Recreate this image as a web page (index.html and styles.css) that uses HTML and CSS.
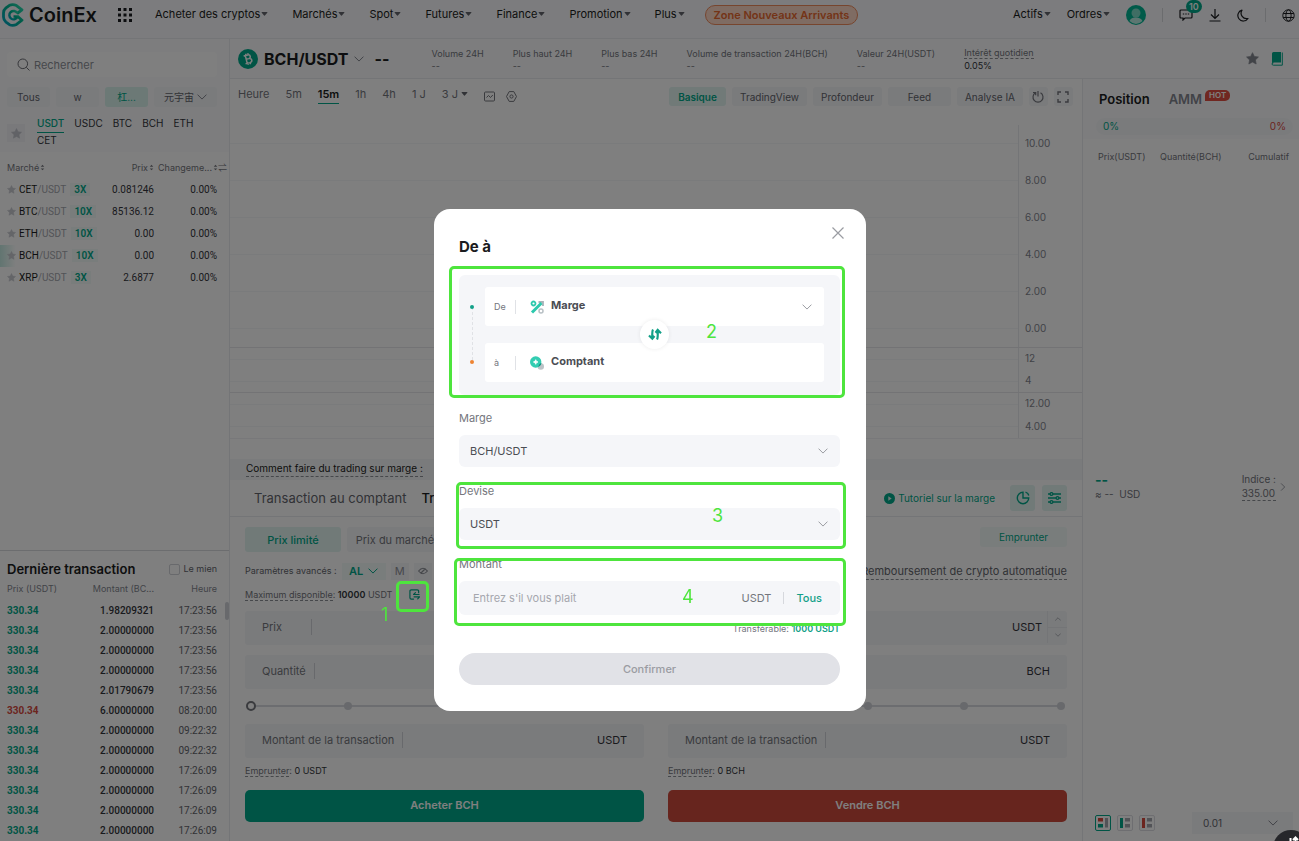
FILE: index.html
```html
<!DOCTYPE html>
<html lang="fr">
  <head>
    <meta charset="UTF-8" />
    <meta name="viewport" content="width=device-width, initial-scale=1.0" />
    <title>CoinEx - BCH/USDT</title>
    <link rel="stylesheet" href="styles.css">
  </head>
  <body>
    <!-- Shared icons -->
    <svg class="sprite" aria-hidden="true">
      <symbol id="caret" viewBox="0 0 8 5"><path d="M1 0h6q1 0 .5.8L4.5 4.5q-.5.6-1 0L.5.8Q0 0 1 0z" fill="currentColor" /></symbol>
      <symbol id="chevron" viewBox="0 0 12 7"><path d="M1 1l5 5 5-5" fill="none" stroke="currentColor" stroke-width="1.2" stroke-linecap="round" stroke-linejoin="round" /></symbol>
      <symbol id="star" viewBox="0 0 12 12"><path d="M6 .6l1.7 3.5 3.8.5-2.8 2.7.7 3.8L6 9.3l-3.4 1.8.7-3.8L.5 4.6l3.8-.5z" fill="currentColor" stroke="currentColor" stroke-width=".6" stroke-linejoin="round" /></symbol>
      <symbol id="sort" viewBox="0 0 5 8"><path d="M.5 3L2.500.8 4.500 3zM.5 5h4L2.500 7.200z" fill="currentColor" /></symbol>
      <symbol id="transfer" viewBox="0 0 12 12"><path d="M10.500 4V2.500q0-1.500-1.500-1.500H2.500Q1 1 1 2.500v7Q1 11 2.500 11H5M11 6H5l2-2M5.500 8.500h6l-2 2.200" fill="none" stroke="currentColor" stroke-width="1.300" stroke-linecap="round" stroke-linejoin="round" /></symbol>
    </svg>

    <div class="app">
      <header class="topbar">
        <a class="brand" href="#">
          <svg width="22" height="24" viewBox="0 0 22 24">
            <defs>
              <linearGradient id="brand-fill" x1="0" y1="1" x2="1" y2="0">
                <stop offset="0" stop-color="#00a5c8" />
                <stop offset=".55" stop-color="#00b591" />
                <stop offset="1" stop-color="#2fe0b4" />
              </linearGradient>
            </defs>
            <path d="M15 10.500L20 6.800L14.500 2.600Q11 .8 7.500 2.300L4 4.900Q1.500 7 1.500 10v4q0 3 2.500 5.100L7.500 21.700q3.500 1.500 7-.3L20 17.200L15.500 13.200" fill="none" stroke="url(#brand-fill)" stroke-width="2.800" stroke-linejoin="round" />
            <path d="M15.300 10.300a4.200 4.200 0 1 0 .2 3.200h-4" fill="none" stroke="url(#brand-fill)" stroke-width="2.400" stroke-linejoin="round" />
          </svg>
          <span>CoinEx</span>
        </a>
        <button class="apps" aria-label="Applications">
          <svg width="14" height="14" viewBox="0 0 14 14" fill="#1b1c20">
            <path d="M0 0h3v3H0zM5.500 0h3v3h-3zM11 0h3v3h-3zM0 5.500h3v3H0zM5.500 5.500h3v3h-3zM11 5.500h3v3h-3zM0 11h3v3H0zM5.500 11h3v3h-3zM11 11h3v3h-3z" />
          </svg>
        </button>
        <nav class="menu">
          <a href="#">Acheter des cryptos<svg class="caret"><use href="#caret" /></svg></a>
          <a href="#">Marchés<svg class="caret"><use href="#caret" /></svg></a>
          <a href="#">Spot<svg class="caret"><use href="#caret" /></svg></a>
          <a href="#">Futures<svg class="caret"><use href="#caret" /></svg></a>
          <a href="#">Finance<svg class="caret"><use href="#caret" /></svg></a>
          <a href="#">Promotion<svg class="caret"><use href="#caret" /></svg></a>
          <a href="#">Plus<svg class="caret"><use href="#caret" /></svg></a>
        </nav>
        <a class="newcomer" href="#">Zone Nouveaux Arrivants</a>
        <div class="account">
          <a href="#">Actifs<svg class="caret"><use href="#caret" /></svg></a>
          <a href="#">Ordres<svg class="caret"><use href="#caret" /></svg></a>
          <svg class="avatar" width="20" height="20" viewBox="0 0 20 20">
            <circle cx="10" cy="10" r="10" fill="#00b493" />
            <circle cx="10" cy="8" r="4.500" fill="#7fdcc9" />
            <path d="M3.500 16q1.500-4 6.500-3.500 5 0 6.500 3.500Q10 22 3.500 16z" fill="#b8ede2" />
          </svg>
          <span class="sep"></span>
          <button class="messages" aria-label="Messages">
            <svg width="14" height="12" viewBox="0 0 14 12" fill="none" stroke="#1b1c20" stroke-width="1.200">
              <path d="M2 1h10q1 0 1 1v6q0 1-1 1H6l-2 2V9H2Q1 9 1 8V2q0-1 1-1z" />
              <path d="M3.800 5h1.400M6.300 5h1.400M8.800 5h1.400" />
            </svg>
            <span class="count">10</span>
          </button>
          <button aria-label="Télécharger">
            <svg width="12" height="13" viewBox="0 0 12 13" fill="none" stroke="#1b1c20" stroke-width="1.200"><path d="M6 0v9M2 5.500l4 4 4-4M.5 12h11" /></svg>
          </button>
          <button aria-label="Mode sombre">
            <svg width="12" height="13" viewBox="0 0 12 13" fill="none" stroke="#1b1c20" stroke-width="1.200"><path d="M5 1.200a5.500 5.500 0 1 0 6 8.300A5.500 5.500 0 0 1 5 1.200z" stroke-linejoin="round" /></svg>
          </button>
          <span class="sep"></span>
          <button aria-label="Langue">
            <svg width="13" height="13" viewBox="0 0 13 13" fill="none" stroke="#1b1c20"><circle cx="6.500" cy="6.500" r="5.700" /><ellipse cx="6.500" cy="6.500" rx="2.600" ry="5.700" /><path d="M1.200 4.500h10.600M1.200 8.500h10.600" /></svg>
          </button>
        </div>
      </header>

      <div class="layout">
        <aside class="sidebar">
          <div class="filters">
            <label class="search">
              <svg width="13" height="13" viewBox="0 0 13 13" fill="none" stroke="#6c6e75"><circle cx="5.800" cy="5.800" r="4.800" /><path d="M9.300 9.300L12.500 12.500" /></svg>
              <input type="text" placeholder="Rechercher" aria-label="Rechercher" />
            </label>
            <div class="tags">
              <button>Tous</button>
              <button>w</button>
              <button class="active">杠...</button>
              <button>元宇宙<svg class="chev"><use href="#chevron" /></svg></button>
            </div>
            <div class="coins">
              <button class="fav" aria-label="Favoris"><svg width="11" height="11"><use href="#star" /></svg></button>
              <div class="coin-tabs">
                <a class="active" href="#">USDT</a><a href="#">USDC</a><a href="#">BTC</a><a href="#">BCH</a><a href="#">ETH</a><a href="#">CET</a>
              </div>
            </div>
          </div>
          <table class="markets">
            <thead>
              <tr>
                <th>Marché<svg class="sort"><use href="#sort" /></svg></th>
                <th>Prix<svg class="sort"><use href="#sort" /></svg></th>
                <th>Changeme...<svg class="sort"><use href="#sort" /></svg>⇌</th>
              </tr>
            </thead>
            <tbody>
              <tr><td><svg class="star"><use href="#star" /></svg>CET<i>/USDT</i><b>3X</b></td><td>0.081246</td><td>0.00%</td></tr>
              <tr><td><svg class="star"><use href="#star" /></svg>BTC<i>/USDT</i><b>10X</b></td><td>85136.12</td><td>0.00%</td></tr>
              <tr><td><svg class="star"><use href="#star" /></svg>ETH<i>/USDT</i><b>10X</b></td><td>0.00</td><td>0.00%</td></tr>
              <tr class="current"><td><svg class="star"><use href="#star" /></svg>BCH<i>/USDT</i><b>10X</b></td><td>0.00</td><td>0.00%</td></tr>
              <tr><td><svg class="star"><use href="#star" /></svg>XRP<i>/USDT</i><b>3X</b></td><td>2.6877</td><td>0.00%</td></tr>
            </tbody>
          </table>

          <section class="trades">
            <div class="trades-head">
              <h2>Dernière transaction</h2>
              <label><input type="checkbox" />Le mien</label>
            </div>
            <table>
              <thead><tr><th>Prix (USDT)</th><th>Montant (BC...</th><th>Heure</th></tr></thead>
              <tbody>
                <tr><td>330.34</td><td>1.98209321</td><td>17:23:56</td></tr>
                <tr><td>330.34</td><td>2.00000000</td><td>17:23:56</td></tr>
                <tr><td>330.34</td><td>2.00000000</td><td>17:23:56</td></tr>
                <tr><td>330.34</td><td>2.00000000</td><td>17:23:56</td></tr>
                <tr><td>330.34</td><td>2.01790679</td><td>17:23:56</td></tr>
                <tr class="sell"><td>330.34</td><td>6.00000000</td><td>08:20:00</td></tr>
                <tr><td>330.34</td><td>2.00000000</td><td>09:22:32</td></tr>
                <tr><td>330.34</td><td>2.00000000</td><td>09:22:32</td></tr>
                <tr><td>330.34</td><td>2.00000000</td><td>17:26:09</td></tr>
                <tr><td>330.34</td><td>2.00000000</td><td>17:26:09</td></tr>
                <tr><td>330.34</td><td>2.00000000</td><td>17:26:09</td></tr>
                <tr><td>330.34</td><td>2.00000000</td><td>17:26:09</td></tr>
              </tbody>
            </table>
            <span class="scroll-thumb"></span>
          </section>
        </aside>

        <div class="content">
          <section class="pair">
            <svg width="20" height="20" viewBox="0 0 20 20">
              <circle cx="10" cy="10" r="10" fill="#00a98a" />
              <g transform="rotate(-14 10 10)" fill="none" stroke="#fff" stroke-width="1.500">
                <path d="M8 6h2.800q2 .1 2 1.900T10.800 9.800H8.200M10.800 9.800q2.600.1 2.600 2.100T11 14H8M8.200 6v8M6.500 6h2M6.500 14h2M9 6V4.300M11.200 6V4.300M9 15.700V14M11.200 15.700V14" />
              </g>
            </svg>
            <h1>BCH/USDT</h1>
            <svg class="chev"><use href="#chevron" /></svg>
            <strong class="last">--</strong>
            <dl class="stats">
              <div><dt>Volume 24H</dt><dd>--</dd></div>
              <div><dt>Plus haut 24H</dt><dd>--</dd></div>
              <div><dt>Plus bas 24H</dt><dd>--</dd></div>
              <div><dt>Volume de transaction 24H(BCH)</dt><dd>--</dd></div>
              <div><dt>Valeur 24H(USDT)</dt><dd>--</dd></div>
              <div><dt class="dashed">Intérêt quotidien</dt><dd class="rate">0.05%</dd></div>
            </dl>
            <div class="pair-tools">
              <svg width="13" height="13"><use href="#star" /></svg>
              <svg width="12" height="14" viewBox="0 0 12 14"><path d="M2.500 0H10v10.500H2.500Q1 10.500 1 12V1.500Q1 0 2.500 0z" fill="#00a98a" /><path d="M11.300.5v12.700H2.500Q1 13.200 1 12t1.500-1.200" fill="none" stroke="#00a98a" /></svg>
            </div>
          </section>

          <div class="workspace">
            <main class="center">
              <div class="chart-bar">
                <div class="periods">
                  <a href="#">Heure</a><a href="#">5m</a><a class="active" href="#">15m</a><a href="#">1h</a><a href="#">4h</a><a href="#">1 J</a><a href="#">3 J<svg class="caret"><use href="#caret" /></svg></a>
                  <svg width="11" height="11" viewBox="0 0 11 11" fill="none" stroke="#74767d"><rect x=".5" y="1" width="10" height="9" rx="1" /><path d="M2.500 6.500l2-2 2 2 2.300-2.500" /></svg>
                  <svg width="11" height="11" viewBox="0 0 11 11" fill="none" stroke="#74767d"><path d="M3.200.6h4.600l2.700 4.900-2.700 4.900H3.200L.5 5.500z" stroke-linejoin="round" /><circle cx="5.500" cy="5.500" r="1.600" /></svg>
                </div>
                <div class="views">
                  <button class="active">Basique</button>
                  <button>TradingView</button>
                  <button>Profondeur</button>
                  <button>Feed</button>
                  <button>Analyse IA</button>
                  <button class="square" aria-label="Réinitialiser"><svg width="12" height="12" viewBox="0 0 12 12" fill="none" stroke="#74767d" stroke-width="1.200"><path d="M6 0v5.500M3.500 1.800a5 5 0 1 0 5 0M1 1.500h2.700v2.700" /></svg></button>
                  <button class="square" aria-label="Plein écran"><svg width="12" height="12" viewBox="0 0 12 12" fill="none" stroke="#74767d" stroke-width="1.400"><path d="M1 4V1h3M8 1h3v3M11 8v3H8M4 11H1V8" /></svg></button>
                </div>
              </div>

              <div class="chart">
                <div class="pane main-pane">
                  <div class="tick"><i></i><span>10.00</span></div>
                  <div class="tick"><i></i><span>8.00</span></div>
                  <div class="tick"><i></i><span>6.00</span></div>
                  <div class="tick"><i></i><span>4.00</span></div>
                  <div class="tick"><i></i><span>2.00</span></div>
                  <div class="tick"><i></i><span>0.00</span></div>
                </div>
                <div class="pane">
                  <div class="tick"><i></i><span>12</span></div>
                  <div class="tick"><i></i><span>4</span></div>
                </div>
                <div class="pane">
                  <div class="tick"><i></i><span>12.00</span></div>
                  <div class="tick"><i></i><span>4.00</span></div>
                </div>
              </div>

              <div class="notice"><a class="dashed" href="#">Comment faire du trading sur marge :</a><span class="step"></span></div>

              <div class="trade-tabs">
                <a href="#">Transaction au comptant</a>
                <a class="active" href="#">Transaction sur marge</a>
                <a class="tutorial" href="#">
                  <svg width="11" height="11" viewBox="0 0 11 11"><circle cx="5.500" cy="5.500" r="5.500" fill="#00a98a" /><path d="M4.300 3.300v4.400l3.400-2.200z" fill="#e2f5f1" /></svg>
                  Tutoriel sur la marge
                </a>
                <button aria-label="Répartition"><svg width="14" height="14" viewBox="0 0 14 14" fill="none" stroke="#00a98a" stroke-width="1.400"><path d="M7 1.300a5.700 5.700 0 1 0 5.700 5.700H7zM9.500 1.200q2.800.8 3.300 3.300" /></svg></button>
                <button aria-label="Réglages"><svg width="13" height="12" viewBox="0 0 13 12" fill="none" stroke="#00a98a" stroke-width="1.300"><path d="M0 2h2M5 2h8M0 6h8M11 6h2M0 10h2M5 10h8" /><circle cx="3.500" cy="2" r="1.400" /><circle cx="9.500" cy="6" r="1.400" /><circle cx="3.500" cy="10" r="1.400" /></svg></button>
              </div>

              <div class="order">
                <div class="order-types">
                  <button class="active">Prix limité</button>
                  <button>Prix du marché</button>
                  <button class="borrow">Emprunter</button>
                </div>
                <div class="advanced">
                  <span>Paramètres avancés :</span>
                  <button class="mode">AL<svg class="chev"><use href="#chevron" /></svg></button>
                  <button>M</button>
                  <button aria-label="Masquer"><svg width="10" height="8" viewBox="0 0 10 8" fill="none" stroke="#8d9097" stroke-width="1.200"><path d="M.6 4Q5-1.500 9.400 4 5 9.500.6 4zM2.500 6.500l5-5" /></svg></button>
                  <a class="dashed" href="#">Remboursement de crypto automatique</a>
                </div>
                <div class="sides">
                  <form class="side">
                    <p class="available"><span class="dashed">Maximum disponible</span>: <b>10000</b> USDT <svg><use href="#transfer" /></svg></p>
                    <label class="field"><span>Prix</span><input type="text" class="price" /><em>USDT</em></label>
                    <label class="field"><span>Quantité</span><input type="text" /><em>BCH</em></label>
                    <div class="slider"><i></i><i></i><i></i><i></i><i></i><input type="range" min="0" max="100" value="0" aria-label="Pourcentage" /></div>
                    <label class="field"><span>Montant de la transaction</span><input type="text" /><em>USDT</em></label>
                    <p class="debt"><span class="dashed">Emprunter</span>: <b>0 USDT</b></p>
                    <button type="button" class="buy">Acheter BCH</button>
                  </form>
                  <form class="side">
                    <p class="available"><span class="dashed">Maximum disponible</span>: <b>10000.0000</b> BCH <svg><use href="#transfer" /></svg></p>
                    <label class="field"><span>Prix</span><input type="text" class="price" /><em>USDT</em><span class="stepper"><svg class="chev up"><use href="#chevron" /></svg><svg class="chev"><use href="#chevron" /></svg></span></label>
                    <label class="field"><span>Quantité</span><input type="text" /><em>BCH</em></label>
                    <div class="slider"><i></i><i></i><i></i><i></i><i></i><input type="range" min="0" max="100" value="0" aria-label="Pourcentage" /></div>
                    <label class="field"><span>Montant de la transaction</span><input type="text" /><em>USDT</em></label>
                    <p class="debt"><span class="dashed">Emprunter</span>: <b>0 BCH</b></p>
                    <button type="button" class="sell-btn">Vendre BCH</button>
                  </form>
                </div>
              </div>
            </main>

            <aside class="book">
              <div class="book-head">
                <div class="book-tabs"><a class="active" href="#">Position</a><a href="#">AMM</a><span class="hot">HOT</span></div>
                <div class="ratio"><span>0%</span><span>0%</span></div>
              </div>
              <div class="book-cols"><span>Prix(USDT)</span><span>Quantité(BCH)</span><span>Cumulatif</span></div>
              <div class="book-mid">
                <div><strong>--</strong><span>≈ --&nbsp; USD</span></div>
                <a href="#"><span class="dashed">Indice :<br />335.00</span><svg class="chev right"><use href="#chevron" /></svg></a>
              </div>
              <div class="book-foot">
                <button class="active" aria-label="Tous les ordres"><svg width="10" height="10" viewBox="0 0 10 10"><path d="M0 0h5v3.500H0z" fill="#d84a3e" /><path d="M0 6h5v3.500H0z" fill="#00a98a" /><path d="M7 0h3v9.500H7z" fill="#a5a7ae" /></svg></button>
                <button aria-label="Achats"><svg width="10" height="10" viewBox="0 0 10 10"><path d="M0 0h3v10H0z" fill="#00a98a" /><path d="M5 0h5v3.500H5zM5 6h5v3.500H5z" fill="#a5a7ae" /></svg></button>
                <button aria-label="Ventes"><svg width="10" height="10" viewBox="0 0 10 10"><path d="M0 0h3v10H0z" fill="#d84a3e" /><path d="M5 0h5v3.500H5zM5 6h5v3.500H5z" fill="#a5a7ae" /></svg></button>
                <div class="precision"><select aria-label="Précision"><option>0.01</option></select><svg class="chev"><use href="#chevron" /></svg></div>
              </div>
            </aside>
          </div>
        </div>
      </div>
    </div>

    <div class="overlay">
      <form class="modal" role="dialog" aria-labelledby="modal-title">
        <button type="button" class="close" aria-label="Fermer"><svg width="12" height="12" viewBox="0 0 12 12" stroke="#9a9ca2" stroke-width="1.200"><path d="M.5.5l11 11M11.500.5l-11 11" /></svg></button>
        <h2 id="modal-title">De à</h2>
        <div class="route">
          <div class="rail"><i></i><i class="to"></i></div>
          <div class="ends">
            <button type="button" class="end">
              <span>De</span>
              <svg width="14" height="14" viewBox="0 0 14 14" fill="none"><path d="M8.500 2h4.500v4" stroke="#a9b2b8" stroke-width="1.800" /><circle cx="11" cy="11" r="2" stroke="#b8c0c5" stroke-width="1.500" /><circle cx="3.500" cy="3.500" r="2" stroke="#2cc9ad" stroke-width="1.800" /><path d="M2 12.500L11.500 3" stroke="#2cc9ad" stroke-width="3" /></svg>
              <strong>Marge</strong>
              <svg class="chev"><use href="#chevron" /></svg>
            </button>
            <div class="end">
              <span>à</span>
              <svg width="14" height="14" viewBox="0 0 14 14"><circle cx="10.800" cy="10.500" r="3.200" fill="#bcc3c7" /><circle cx="5.700" cy="6" r="5.700" fill="#33cdb2" /><path d="M5.700 3.700l.7 1.600 1.600.7-1.600.7-.7 1.600L5 6.700 3.400 6 5 5.300z" fill="#fff" stroke="#fff" stroke-width=".8" /><path d="M8.300 11q3-1.300 3.200-4-2.500.5-3.200 4z" fill="#118f7c" /></svg>
              <strong>Comptant</strong>
            </div>
          </div>
          <button type="button" class="swap" aria-label="Inverser"><svg width="14" height="13" viewBox="0 0 14 13" fill="none" stroke="#12a088" stroke-width="2.200"><path d="M5 1.500Q4 3 4.300 10.500M1 7.500l3.300 3.200L6.500 8M9 11.500q1-1.500.7-9M13 5.200L9.700 2 7.500 4.800" /></svg></button>
        </div>
        <label for="pair-select">Marge</label>
        <div class="picker"><select id="pair-select"><option>BCH/USDT</option></select><svg class="chev"><use href="#chevron" /></svg></div>
        <label for="asset-select">Devise</label>
        <div class="picker"><select id="asset-select"><option>USDT</option></select><svg class="chev"><use href="#chevron" /></svg></div>
        <label for="amount">Montant</label>
        <div class="amount"><input id="amount" type="text" placeholder="Entrez s'il vous plait" /><span>USDT</span><button type="button">Tous</button></div>
        <p class="transferable">Transférable: <b>1000 USDT</b></p>
        <button type="button" class="confirm" disabled>Confirmer</button>

        <!-- Tutorial markers -->
        <span class="mark mark-1"></span><span class="num num-1">1</span>
        <span class="mark mark-2"></span><span class="num num-2">2</span>
        <span class="mark mark-3"></span><span class="num num-3">3</span>
        <span class="mark mark-4"></span><span class="num num-4">4</span>
      </form>
    </div>
    <button class="helper" aria-label="Outils"><svg width="12" height="12" viewBox="0 0 12 12" fill="none" stroke="#fff" stroke-width="2"><path d="M3.500 2v9M8.500 10V1M6 4l2.500-2.500L11 4" /></svg></button>
  </body>
</html>
```
FILE: styles.css
```css
* {
  box-sizing: border-box;
}

body {
  margin: 0;
  font-family: Inter, "Noto Sans CJK SC", sans-serif;
  font-size: 11px;
  line-height: 16px;
  color: #1b1c20;
  background-color: #fff;
}

a {
  color: inherit;
  text-decoration: none;
}

button,
input,
select {
  font: inherit;
  color: inherit;
  border: none;
  background: none;
  padding: 0;
  margin: 0;
}

button {
  cursor: pointer;
}

h1,
h2,
p,
dl,
dd {
  margin: 0;
}

table {
  width: 100%;
  border-collapse: collapse;
  table-layout: fixed;
}

th,
td {
  padding: 0;
  font-weight: 400;
}

.sprite {
  display: none;
}

.caret {
  width: 7px;
  height: 4px;
  margin-left: 1px;
  color: #63656c;
}

.chev {
  width: 10px;
  height: 6px;
  flex: none;
  color: #83868f;
}

.dashed {
  border-bottom: 1px dashed #8d9097;
}

.app {
  display: flex;
  flex-direction: column;
  height: 100vh;
  overflow: hidden;
}

/* Top bar */
.topbar {
  display: flex;
  flex: none;
  align-items: center;
  height: 39px;
  padding: 0 4px 8px 2px;
  border-bottom: 1px solid #e9eaee;
  background-color: #f8f9fc;
}

.brand {
  display: flex;
  align-items: center;
  gap: 5px;
  width: 116px;
  font-size: 20px;
  font-weight: 600;
}

.apps svg,
.account svg,
.views svg,
.trade-tabs svg {
  display: block;
}

.menu {
  display: flex;
  gap: 24px;
  margin: 0 20px 0 23px;
}

.menu a,
.account a {
  display: flex;
  align-items: center;
  padding-bottom: 2px;
  white-space: nowrap;
}

.newcomer {
  padding: 1px 8px;
  border: 1px solid #ee8a5c;
  border-radius: 12px;
  background-color: #ffd9c7;
  color: #e8682f;
  font-weight: 600;
  white-space: nowrap;
}

.account {
  display: flex;
  align-items: center;
  gap: 16px;
  margin-left: auto;
}

.sep {
  width: 1px;
  height: 14px;
  background-color: #d6d8dd;
}

.messages {
  position: relative;
}

.count {
  position: absolute;
  left: 7px;
  top: -9px;
  padding: 0 3px;
  border-radius: 8px;
  background-color: #00a98a;
  color: #fff;
  font-size: 9px;
  line-height: 13px;
  font-weight: 600;
}

.layout {
  display: flex;
  flex: 1;
  min-height: 0;
}

/* Market list */
.sidebar {
  display: flex;
  flex-direction: column;
  flex: none;
  width: 230px;
  border-right: 1px solid #e9eaee;
}

.filters {
  padding: 13px 12px 3px 7px;
  background-color: #fafbfd;
}

.search {
  display: flex;
  align-items: center;
  gap: 4px;
  height: 25px;
  padding: 0 10px;
  border-radius: 4px;
  background-color: #fff;
}

.search input {
  min-width: 0;
  flex: 1;
}

.search input::placeholder {
  color: #8d9097;
}

.tags {
  display: grid;
  grid-template-columns: 43px 43px 43px 1fr;
  gap: 6px;
  margin-top: 10px;
}

.tags button {
  display: flex;
  align-items: center;
  justify-content: center;
  gap: 3px;
  height: 20px;
  border-radius: 3px;
  background-color: #f5f6f9;
  color: #63656c;
  font-size: 10px;
}

.tags .active {
  background-color: #d8f3ed;
  color: #00a98a;
}

.coins {
  display: flex;
  gap: 12px;
  margin-top: 8px;
  color: #33353b;
  font-size: 10px;
}

.fav {
  display: flex;
  align-items: center;
  justify-content: center;
  width: 18px;
  height: 18px;
  margin-top: 9px;
  background-color: #f2f3f7;
  color: #c3c5cc;
}

.coin-tabs {
  display: flex;
  flex: 1;
  flex-wrap: wrap;
  column-gap: 10px;
  padding-right: 16px;
}

.coin-tabs a {
  line-height: 17px;
}

.coin-tabs .active {
  color: #00a98a;
  font-weight: 500;
  box-shadow: 0 1px #00a98a;
}

.markets {
  margin-top: 4px;
  font-size: 10px;
}

.markets td {
  color: #33353b;
  font-family: Roboto, sans-serif;
}

.markets th {
  height: 23px;
  color: #74767d;
  font-size: 9px;
  text-align: right;
  white-space: nowrap;
}

.markets th:first-child {
  width: 110px;
  padding-left: 7px;
  text-align: left;
}

.markets th:nth-child(2) {
  width: 44px;
}

.markets th:last-child {
  padding-right: 2px;
}

.markets td {
  height: 22px;
  text-align: right;
  white-space: nowrap;
}

.markets td:first-child {
  padding-left: 7px;
  color: #1b1c20;
  text-align: left;
}

.markets td:last-child {
  padding-right: 12px;
}

.markets i {
  color: #a5a7ae;
  font-style: normal;
}

.markets b {
  margin-left: 4px;
  padding: 1px 4px;
  background-color: #f3fbf9;
  color: #00a98a;
  font-weight: 600;
}

.markets .current td:first-child {
  background: linear-gradient(90deg, #c4eae2, #fff 16px);
}

.star {
  width: 9px;
  height: 9px;
  margin-right: 3px;
  vertical-align: -1px;
  color: #c8cad0;
}

.sort {
  width: 5px;
  height: 7px;
  margin-left: 1px;
}

/* Latest trades */
.trades {
  position: relative;
  margin-top: auto;
  padding: 8px 12px 0 7px;
  border-top: 1px solid #d9dadf;
  font-size: 10px;
}

.trades-head {
  display: flex;
  justify-content: space-between;
  align-items: center;
  height: 20px;
  color: #63656c;
}

.trades h2 {
  color: #1b1c20;
  font-size: 13px;
  font-weight: 600;
}

.trades label {
  display: flex;
  align-items: center;
  gap: 4px;
  font-size: 9px;
}

.trades input {
  appearance: none;
  width: 11px;
  height: 11px;
  border: 1px solid #d0d2d8;
  border-radius: 2px;
}

.trades th,
.trades td {
  height: 20px;
  text-align: right;
  white-space: nowrap;
}

.trades th {
  height: 22px;
  padding-bottom: 3px;
  color: #83868f;
  font-size: 9px;
}

.trades th:first-child,
.trades td:first-child {
  width: 70px;
  text-align: left;
}

.trades th:nth-child(2) {
  width: 77px;
}

.trades td {
  color: #33353b;
  font-family: Roboto, sans-serif;
  font-weight: 500;
}

.trades td:first-child {
  color: #00a98a;
  font-weight: 700;
}

.trades .sell td:first-child {
  color: #d84a3e;
}

.trades td:last-child {
  color: #63656c;
  font-weight: 400;
}

.scroll-thumb {
  position: absolute;
  right: 0;
  top: 51px;
  width: 4px;
  height: 18px;
  border-radius: 2px;
  background-color: #d0d2d8;
}

.content {
  display: flex;
  flex-direction: column;
  flex: 1;
  min-width: 0;
}

/* Pair header */
.pair {
  display: flex;
  flex: none;
  align-items: center;
  height: 40px;
  padding: 0 16px 0 8px;
  border-bottom: 1px solid #e9eaee;
  background-color: #fafbfd;
}

.pair h1 {
  margin: 0 5px 0 6px;
  font-size: 16px;
}

.last {
  width: 57px;
  margin-left: 11px;
  font-size: 16px;
}

.stats {
  display: flex;
  gap: 29px;
  padding-top: 2px;
  color: #74767d;
  font-size: 9px;
  line-height: 12px;
  white-space: nowrap;
}

.rate {
  color: #33353b;
}

.stats .dashed {
  margin-bottom: 1px;
  line-height: 10px;
}

.pair-tools {
  display: flex;
  align-items: center;
  gap: 12px;
  margin-left: auto;
  color: #83868f;
}

.workspace {
  display: flex;
  flex: 1;
  min-height: 0;
}

.center {
  flex: 1;
  min-width: 0;
}

/* Chart */
.chart-bar {
  display: flex;
  justify-content: space-between;
  padding: 8px 9px 0 8px;
}

.periods {
  display: flex;
  align-items: flex-start;
  gap: 16px;
  color: #74767d;
  line-height: 14px;
  white-space: nowrap;
}

.periods a {
  padding-bottom: 2px;
}

.periods svg {
  margin: 4px -5px 0 0;
}

.periods a svg {
  margin: 0 0 2px 3px;
}

.periods .active {
  color: #1b1c20;
  font-weight: 600;
  box-shadow: 0 1px #00a98a;
}

.views {
  display: flex;
  gap: 6px;
}

.views button {
  min-width: 63px;
  height: 19px;
  padding: 0 8px;
  border-radius: 3px;
  background-color: #f5f6f9;
  color: #63656c;
  font-size: 10px;
}

.views .active {
  min-width: 57px;
  background-color: #e2f5f1;
  color: #00a98a;
  font-weight: 600;
}

.views .square {
  min-width: 19px;
  padding: 0 3px;
}

.chart {
  padding-bottom: 20px;
}

.pane {
  display: flex;
  flex-direction: column;
  height: 45px;
  border-bottom: 1px solid #e6e7eb;
}

.pane:last-child {
  height: 46px;
  border-bottom-color: #f0f1f4;
}

.main-pane {
  height: 242px;
  padding-top: 19px;
}

.tick {
  display: flex;
  flex: 1;
  align-items: center;
}

.tick i {
  flex: 1;
  height: 1px;
  background-color: #f5f6f9;
}

.tick span {
  display: flex;
  align-items: center;
  align-self: stretch;
  width: 64px;
  padding: 0 0 2px 6px;
  border-left: 1px solid #e9eaee;
  color: #83868f;
  font-size: 10px;
}

.notice {
  display: flex;
  align-items: center;
  gap: 12px;
  height: 21px;
  padding: 0 0 2px 16px;
  background-color: #f5f6f9;
  font-size: 10px;
}

.step {
  width: 12px;
  height: 12px;
  border-radius: 50%;
  background-color: #d9dbe0;
}

.trade-tabs {
  display: flex;
  align-items: center;
  gap: 7px;
  height: 37px;
  padding: 0 15px 0 24px;
  border-bottom: 1px solid #e9eaee;
  color: #63656c;
  font-size: 13px;
}

.trade-tabs .active {
  margin-left: 8px;
  color: #1b1c20;
  font-weight: 500;
}

.trade-tabs .tutorial {
  display: flex;
  align-items: center;
  gap: 3px;
  margin-left: auto;
  padding-right: 8px;
  color: #00a98a;
  font-size: 10px;
}

.trade-tabs button {
  display: flex;
  align-items: center;
  justify-content: center;
  width: 25px;
  height: 26px;
  border-radius: 3px;
  background-color: #e2f5f1;
}

/* Order form */
.order {
  padding: 10px 15px 0;
}

.order-types {
  display: flex;
  align-items: flex-start;
  gap: 6px;
}

.order-types button {
  width: 96px;
  height: 25px;
  border-radius: 3px;
  background-color: #f5f6f9;
  color: #74767d;
}

.order-types .active {
  background-color: #e2f5f1;
  color: #00a98a;
  font-weight: 500;
}

.order-types .borrow {
  width: 87px;
  height: 20px;
  margin-left: auto;
  background-color: #f3fbf9;
  color: #00a98a;
  font-size: 10px;
}

.advanced {
  display: flex;
  align-items: center;
  gap: 5px;
  height: 18px;
  margin-top: 10px;
  color: #63656c;
  font-size: 9px;
}

.advanced button {
  display: flex;
  align-items: center;
  justify-content: center;
  gap: 5px;
  width: 18px;
  height: 17px;
  background-color: #f5f6f9;
  color: #8d9097;
  font-size: 11px;
}

.advanced .mode {
  width: 44px;
  background-color: #f3fbf9;
  color: #00a98a;
  font-weight: 600;
}

.mode .chev {
  color: #00a98a;
}

.advanced a {
  margin-left: auto;
  font-size: 11px;
}

.sides {
  display: grid;
  grid-template-columns: 1fr 1fr;
  gap: 24px;
}

.available,
.debt {
  height: 16px;
  color: #74767d;
  font-size: 9px;
  line-height: 12px;
  white-space: nowrap;
}

.available {
  margin: 9px 0 6px;
}

.available svg {
  width: 11px;
  height: 11px;
  margin-left: 14px;
  vertical-align: -2px;
  color: #00a98a;
}

.available b {
  color: #33353b;
  font-weight: 600;
}

.debt b {
  color: #33353b;
  font-weight: 400;
}

.field {
  display: flex;
  align-items: center;
  height: 34px;
  padding: 0 0 2px 17px;
  border-radius: 3px;
  background-color: #f5f6f9;
  color: #74767d;
}

.field + .field {
  margin-top: 10px;
}

.field input {
  flex: 1;
  min-width: 0;
  height: 16px;
  margin-left: 8px;
  border-left: 1px solid #d0d2d8;
}

.field .price {
  margin-left: 29px;
}

.field em {
  margin-right: 17px;
  color: #33353b;
  font-style: normal;
}

.field em:nth-last-child(2) {
  margin-right: 5px;
}

.stepper {
  display: flex;
  flex-direction: column;
  justify-content: space-around;
  align-items: center;
  align-self: stretch;
  width: 20px;
  border-left: 1px solid #e9eaee;
  background: linear-gradient(#e9eaee, #e9eaee) center / 100% 1px no-repeat;
}

.stepper .chev {
  width: 6px;
  height: 4px;
}

.up {
  transform: rotate(180deg);
}

.slider {
  position: relative;
  display: flex;
  justify-content: space-between;
  align-items: center;
  height: 34px;
  margin-bottom: 1px;
  padding: 0 2px;
  background: linear-gradient(#d9dbe0, #d9dbe0) center / calc(100% - 12px) 2px no-repeat;
}

.slider i {
  width: 8px;
  height: 8px;
  border-radius: 50%;
  background-color: #d0d2d8;
}

.slider input {
  position: absolute;
  inset: 0;
  width: 100%;
  appearance: none;
}

.slider input::-webkit-slider-thumb {
  appearance: none;
  width: 10px;
  height: 10px;
  margin-left: 1px;
  border: 2px solid #74767d;
  border-radius: 50%;
  background-color: #fff;
}

.debt {
  margin: 7px 0 9px;
}

.buy,
.sell-btn {
  width: 100%;
  height: 32px;
  padding-bottom: 2px;
  border-radius: 5px;
  background-color: #00a98a;
  color: #fff;
  font-weight: 600;
}

.sell-btn {
  background-color: #cf4a3d;
}

/* Order book */
.book {
  display: flex;
  flex-direction: column;
  flex: none;
  width: 217px;
  border-left: 1px solid #e9eaee;
}

.book-head {
  padding: 10px 6px 4px 13px;
  background-color: #fafbfd;
}

.book-tabs {
  display: flex;
  align-items: center;
  height: 20px;
  padding-left: 3px;
  color: #83868f;
  font-size: 13px;
  font-weight: 600;
}

.book-tabs a {
  margin-right: 19px;
}

.book-tabs a:nth-child(2) {
  margin-right: 3px;
}

.book-tabs .active {
  color: #1b1c20;
}

.hot {
  align-self: flex-start;
  margin-top: 1px;
  padding: 0 4px;
  border-radius: 5px 5px 5px 0;
  background-color: #e04f43;
  color: #fff;
  font-size: 8px;
  line-height: 11px;
}

.ratio {
  display: flex;
  justify-content: space-between;
  margin-top: 9px;
  padding: 0 7px;
  border-radius: 9px;
  background-color: #f5f6f9;
  color: #00a98a;
  font-size: 10px;
  line-height: 17px;
}

.ratio span:last-child {
  color: #d84a3e;
}

.book-cols {
  display: grid;
  grid-template-columns: 62px 1fr auto;
  padding: 10px 10px 0 15px;
  color: #74767d;
  font-size: 9px;
}

.book-mid {
  display: flex;
  flex: 1;
  justify-content: space-between;
  align-items: center;
  padding: 0 12px 4px;
  color: #74767d;
  font-size: 10px;
  line-height: 14px;
}

.book-mid strong {
  display: block;
  color: #00a98a;
  font-size: 14px;
}

.book-mid a {
  display: flex;
  align-items: center;
  gap: 3px;
}

.right {
  width: 8px;
  transform: rotate(-90deg);
}

.book-foot {
  display: flex;
  align-items: center;
  gap: 6px;
  padding: 0 6px 7px 12px;
}

.book-foot button {
  display: flex;
  align-items: center;
  justify-content: center;
  width: 16px;
  height: 16px;
  border: 1px solid #dcdde2;
  border-radius: 2px;
}

.book-foot .active {
  border-color: #00a98a;
}

.precision {
  position: relative;
  width: 101px;
  margin-left: auto;
}

.precision select {
  appearance: none;
  width: 100%;
  height: 22px;
  padding: 0 11px;
  background-color: #f5f6f9;
  color: #63656c;
  font-size: 10px;
}

.precision .chev {
  position: absolute;
  right: 15px;
  top: 8px;
}

/* Transfer modal */
.overlay {
  position: fixed;
  inset: 0;
  display: flex;
  justify-content: center;
  align-items: flex-start;
  padding: 209px 0 0 1px;
  background-color: rgba(0, 0, 0, 0.5);
}

.modal {
  position: relative;
  display: flex;
  flex-direction: column;
  width: 432px;
  padding: 27px 26px 26px 25px;
  border-radius: 16px;
  background-color: #fff;
}

.modal .chev {
  color: #9a9ca2;
}

.close {
  position: absolute;
  right: 22px;
  top: 18px;
  line-height: 0;
}

.modal h2 {
  font-size: 15px;
  line-height: 22px;
}

.route {
  position: relative;
  display: flex;
  margin: 17px 0 15px;
  padding: 12px 16px 13px 11px;
  border-radius: 6px;
  background-color: #f5f6f9;
}

.rail {
  display: flex;
  flex-direction: column;
  justify-content: space-between;
  width: 15px;
  padding: 18px 0;
  background: repeating-linear-gradient(#e0e2e6 0 3px, transparent 3px 5px) 2px 20px / 1px 54px no-repeat;
}

.rail i {
  width: 4px;
  height: 4px;
  border-radius: 50%;
  background-color: #12a088;
}

.rail .to {
  background-color: #ee8433;
}

.ends {
  display: grid;
  flex: 1;
  gap: 17px;
}

.end {
  display: flex;
  align-items: center;
  height: 39px;
  padding: 0 12px 0 9px;
  border-radius: 3px;
  background-color: #fff;
  color: #4b4d53;
}

.end span {
  width: 22px;
  margin-right: 14px;
  border-right: 1px solid #e0e2e6;
  color: #74767d;
  font-size: 9px;
  line-height: 14px;
  text-align: left;
}

.end strong {
  margin-left: 7px;
  padding-bottom: 3px;
}

.end .chev {
  margin-left: auto;
}

.swap {
  position: absolute;
  left: 181px;
  top: 45px;
  width: 29px;
  height: 29px;
  padding: 8px 7px;
  border-radius: 50%;
  background-color: #fff;
  box-shadow: 0 0 4px rgba(0, 0, 0, 0.08);
  line-height: 0;
}

.modal label {
  color: #74767d;
}

.picker {
  position: relative;
  margin: 9px 0 16px;
}

.picker select {
  appearance: none;
  display: block;
  width: 100%;
  height: 32px;
  padding: 0 11px;
  border-radius: 6px;
  background-color: #f5f6f9;
  color: #4b4d53;
}

.picker .chev {
  position: absolute;
  right: 12px;
  top: 13px;
}

.amount {
  display: flex;
  align-items: center;
  height: 34px;
  margin: 9px 0 6px;
  padding: 0 18px 0 14px;
  border-radius: 6px;
  background-color: #f5f6f9;
  color: #74767d;
}

.amount input {
  flex: 1;
  min-width: 0;
}

.amount input::placeholder {
  color: #a5a7ae;
}

.amount button {
  margin-left: 12px;
  padding-left: 12px;
  border-left: 1px solid #d6d8dd;
  color: #12a088;
  font-weight: 500;
  line-height: 12px;
}

.transferable {
  color: #74767d;
  font-size: 9px;
  text-align: right;
}

.transferable b {
  color: #12a088;
  font-weight: 600;
}

.confirm {
  height: 32px;
  margin-top: 16px;
  border-radius: 16px;
  background-color: #e1e2e7;
  color: #9a9ca2;
  font-weight: 500;
}

/* Numbered markers over the page */
.mark {
  position: absolute;
  border: 3px solid #4ee53d;
  border-radius: 5px;
}

.num {
  position: absolute;
  color: #4ee53d;
  font-size: 18px;
  line-height: 20px;
}

.mark-1 {
  left: -38px;
  top: 372px;
  width: 33px;
  height: 31px;
}

.mark-2 {
  left: 15px;
  top: 57px;
  width: 396px;
  height: 132px;
}

.mark-3 {
  left: 22px;
  top: 273px;
  width: 390px;
  height: 67px;
}

.mark-4 {
  left: 20px;
  top: 349px;
  width: 392px;
  height: 68px;
}

.num-1 {
  left: -53px;
  top: 396px;
}

.num-2 {
  left: 272px;
  top: 113px;
}

.num-3 {
  left: 278px;
  top: 297px;
}

.num-4 {
  left: 248px;
  top: 378px;
}

.helper {
  position: fixed;
  right: -10px;
  bottom: -25px;
  display: flex;
  justify-content: center;
  width: 36px;
  height: 36px;
  padding: 6px 0 0 4px;
  border-radius: 50%;
  background-color: #26272b;
  line-height: 0;
}
```
